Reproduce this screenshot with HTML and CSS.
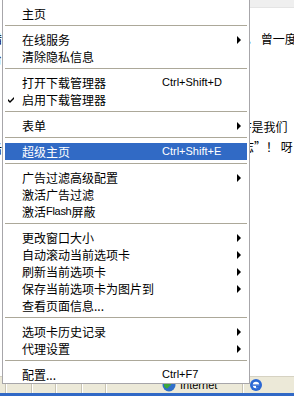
FILE: index.html
```html
<!DOCTYPE html>
<html lang="zh-CN">
<head>
  <meta charset="UTF-8">
  <title>右键菜单</title>
  <link rel="stylesheet" href="styles.css">
</head>
<body>
  <div class="window">
    <div class="page">
      <div class="left-col">
        <div class="frag frag-1">措</div>
        <div class="frag frag-2">台</div>
        <div class="frag frag-3">后</div>
      </div>
      <div class="right-col">
        <div class="strip"></div>
        <div class="line line-1">。 曾一度</div>
        <div class="line line-2">F是我们</div>
        <div class="line line-3">志”！ 呀</div>
      </div>
    </div>

    <div class="statusbar">
      <div class="panel" style="width:5px"></div>
      <div class="panel" style="width:24px"></div>
      <div class="panel" style="width:22px"></div>
      <div class="panel" style="width:24px"></div>
      <div class="panel" style="width:22px"></div>
      <div class="panel zone">
        <svg class="globe" width="14" height="14" viewBox="0 0 14 14">
          <circle cx="7" cy="7" r="6.5" fill="#2f6fc9"/>
          <path d="M3 4 C5 2 8 3 9 5 C10 7 7 8 6 10 C5 11 3 10 2 8 C2 6 2 5 3 4 Z" fill="#3ea83b"/>
        </svg>
        <span>Internet</span>
      </div>
      <div class="panel ie">
        <svg width="14" height="14" viewBox="0 0 14 14">
          <circle cx="7" cy="7" r="6" fill="#2b68d4"/>
          <circle cx="7" cy="7" r="3.2" fill="#fff"/>
          <rect x="3.8" y="6.4" width="6.4" height="1.4" fill="#2b68d4"/>
          <rect x="7" y="7.8" width="3.4" height="2" fill="#2b68d4"/>
        </svg>
      </div>
    </div>
    <div class="taskbar-edge"></div>

    <div class="menu">
      <div class="item">主页</div>
      <div class="sep"></div>
      <div class="item sub">在线服务</div>
      <div class="item">清除隐私信息</div>
      <div class="sep"></div>
      <div class="item"><span class="label">打开下载管理器</span><span class="key">Ctrl+Shift+D</span></div>
      <div class="item">
        <svg class="check" width="7" height="7" viewBox="0 0 7 7"><path d="M0 3 L2 5 L6 1 L6 3 L2 7 L0 5 Z" fill="#000"/></svg>
        启用下载管理器
      </div>
      <div class="sep"></div>
      <div class="item sub">表单</div>
      <div class="sep"></div>
      <div class="item active"><span class="label">超级主页</span><span class="key">Ctrl+Shift+E</span></div>
      <div class="sep"></div>
      <div class="item sub">广告过滤高级配置</div>
      <div class="item">激活广告过滤</div>
      <div class="item">激活<span class="latin">Flash</span>屏蔽</div>
      <div class="sep"></div>
      <div class="item sub">更改窗口大小</div>
      <div class="item sub">自动滚动当前选项卡</div>
      <div class="item sub">刷新当前选项卡</div>
      <div class="item sub">保存当前选项卡为图片到</div>
      <div class="item">查看页面信息...</div>
      <div class="sep"></div>
      <div class="item sub">选项卡历史记录</div>
      <div class="item sub">代理设置</div>
      <div class="sep"></div>
      <div class="item"><span class="label">配置...</span><span class="key">Ctrl+F7</span></div>
    </div>
  </div>
</body>
</html>
```

FILE: styles.css
```css
body {
  margin: 0;
  font-family: "Noto Sans CJK SC", "Liberation Sans", sans-serif;
  font-size: 12px;
  background-color: #ffffff;
}

.window {
  position: relative;
  width: 294px;
  height: 396px;
  overflow: hidden;
  display: flex;
  flex-direction: column;
}

.page {
  flex: 1;
  display: flex;
  justify-content: space-between;
}

.left-col {
  width: 2px;
  overflow: hidden;
  direction: rtl;
}

.frag {
  width: 12px;
  line-height: 12px;
  color: #000;
}

.frag-1 { margin-top: 33px; }
.frag-2 { margin-top: 8px; }
.frag-3 { margin-top: 78px; }

.right-col {
  width: 48px;
  overflow: hidden;
  white-space: nowrap;
}

.strip {
  height: 7px;
  background-color: #efefef;
  border-bottom: 1px solid #e4e4e4;
}

.line {
  line-height: 14px;
  color: #000;
}

.line-1 { margin-top: 24px; }
.line-2 { margin-top: 74px; margin-left: -1px; }
.line-3 { margin-top: 6px; margin-left: -4px; }

.statusbar {
  height: 16px;
  display: flex;
  background-color: #ece9d8;
  border-top: 1px solid #d6d2c2;
}

.panel {
  border-right: 1px solid #c8c4b4;
  box-shadow: 1px 0 0 #ffffff;
  margin-right: 1px;
  display: flex;
  align-items: center;
}

.zone {
  width: 80px;
  padding-left: 55px;
  gap: 4px;
  font-family: "Liberation Sans", sans-serif;
  font-size: 11px;
}

.ie {
  padding-left: 5px;
  border-right: 0;
  box-shadow: none;
}

.taskbar-edge {
  height: 3px;
  background-color: #3169c6;
}

.menu {
  position: absolute;
  left: 2px;
  top: 0;
  width: 242px;
  padding: 5px 2px 0;
  background-color: #ffffff;
  border: 1px solid #a7a6aa;
  border-top: 0;
  color: #000;
}

.item {
  position: relative;
  height: 17px;
  line-height: 17px;
  padding-left: 17px;
  display: flex;
  align-items: center;
  white-space: nowrap;
}

.label {
  width: 140px;
}

.key {
  font-family: "Liberation Sans", sans-serif;
  font-size: 11px;
}

.latin {
  font-family: "Liberation Sans", sans-serif;
  font-size: 11px;
  letter-spacing: -0.3px;
}

.check {
  position: absolute;
  left: 3px;
  top: 5px;
}

.sub::after {
  content: "";
  position: absolute;
  right: 6px;
  top: 5px;
  border-left: 4px solid #000;
  border-top: 4px solid transparent;
  border-bottom: 4px solid transparent;
}

.active {
  background-color: #316ac5;
  color: #ffffff;
}

.sep {
  height: 9px;
  display: flex;
  align-items: flex-start;
}

.sep::before {
  content: "";
  flex: 1;
  margin-top: 3px;
  height: 1px;
  background-color: #aca899;
}
```
